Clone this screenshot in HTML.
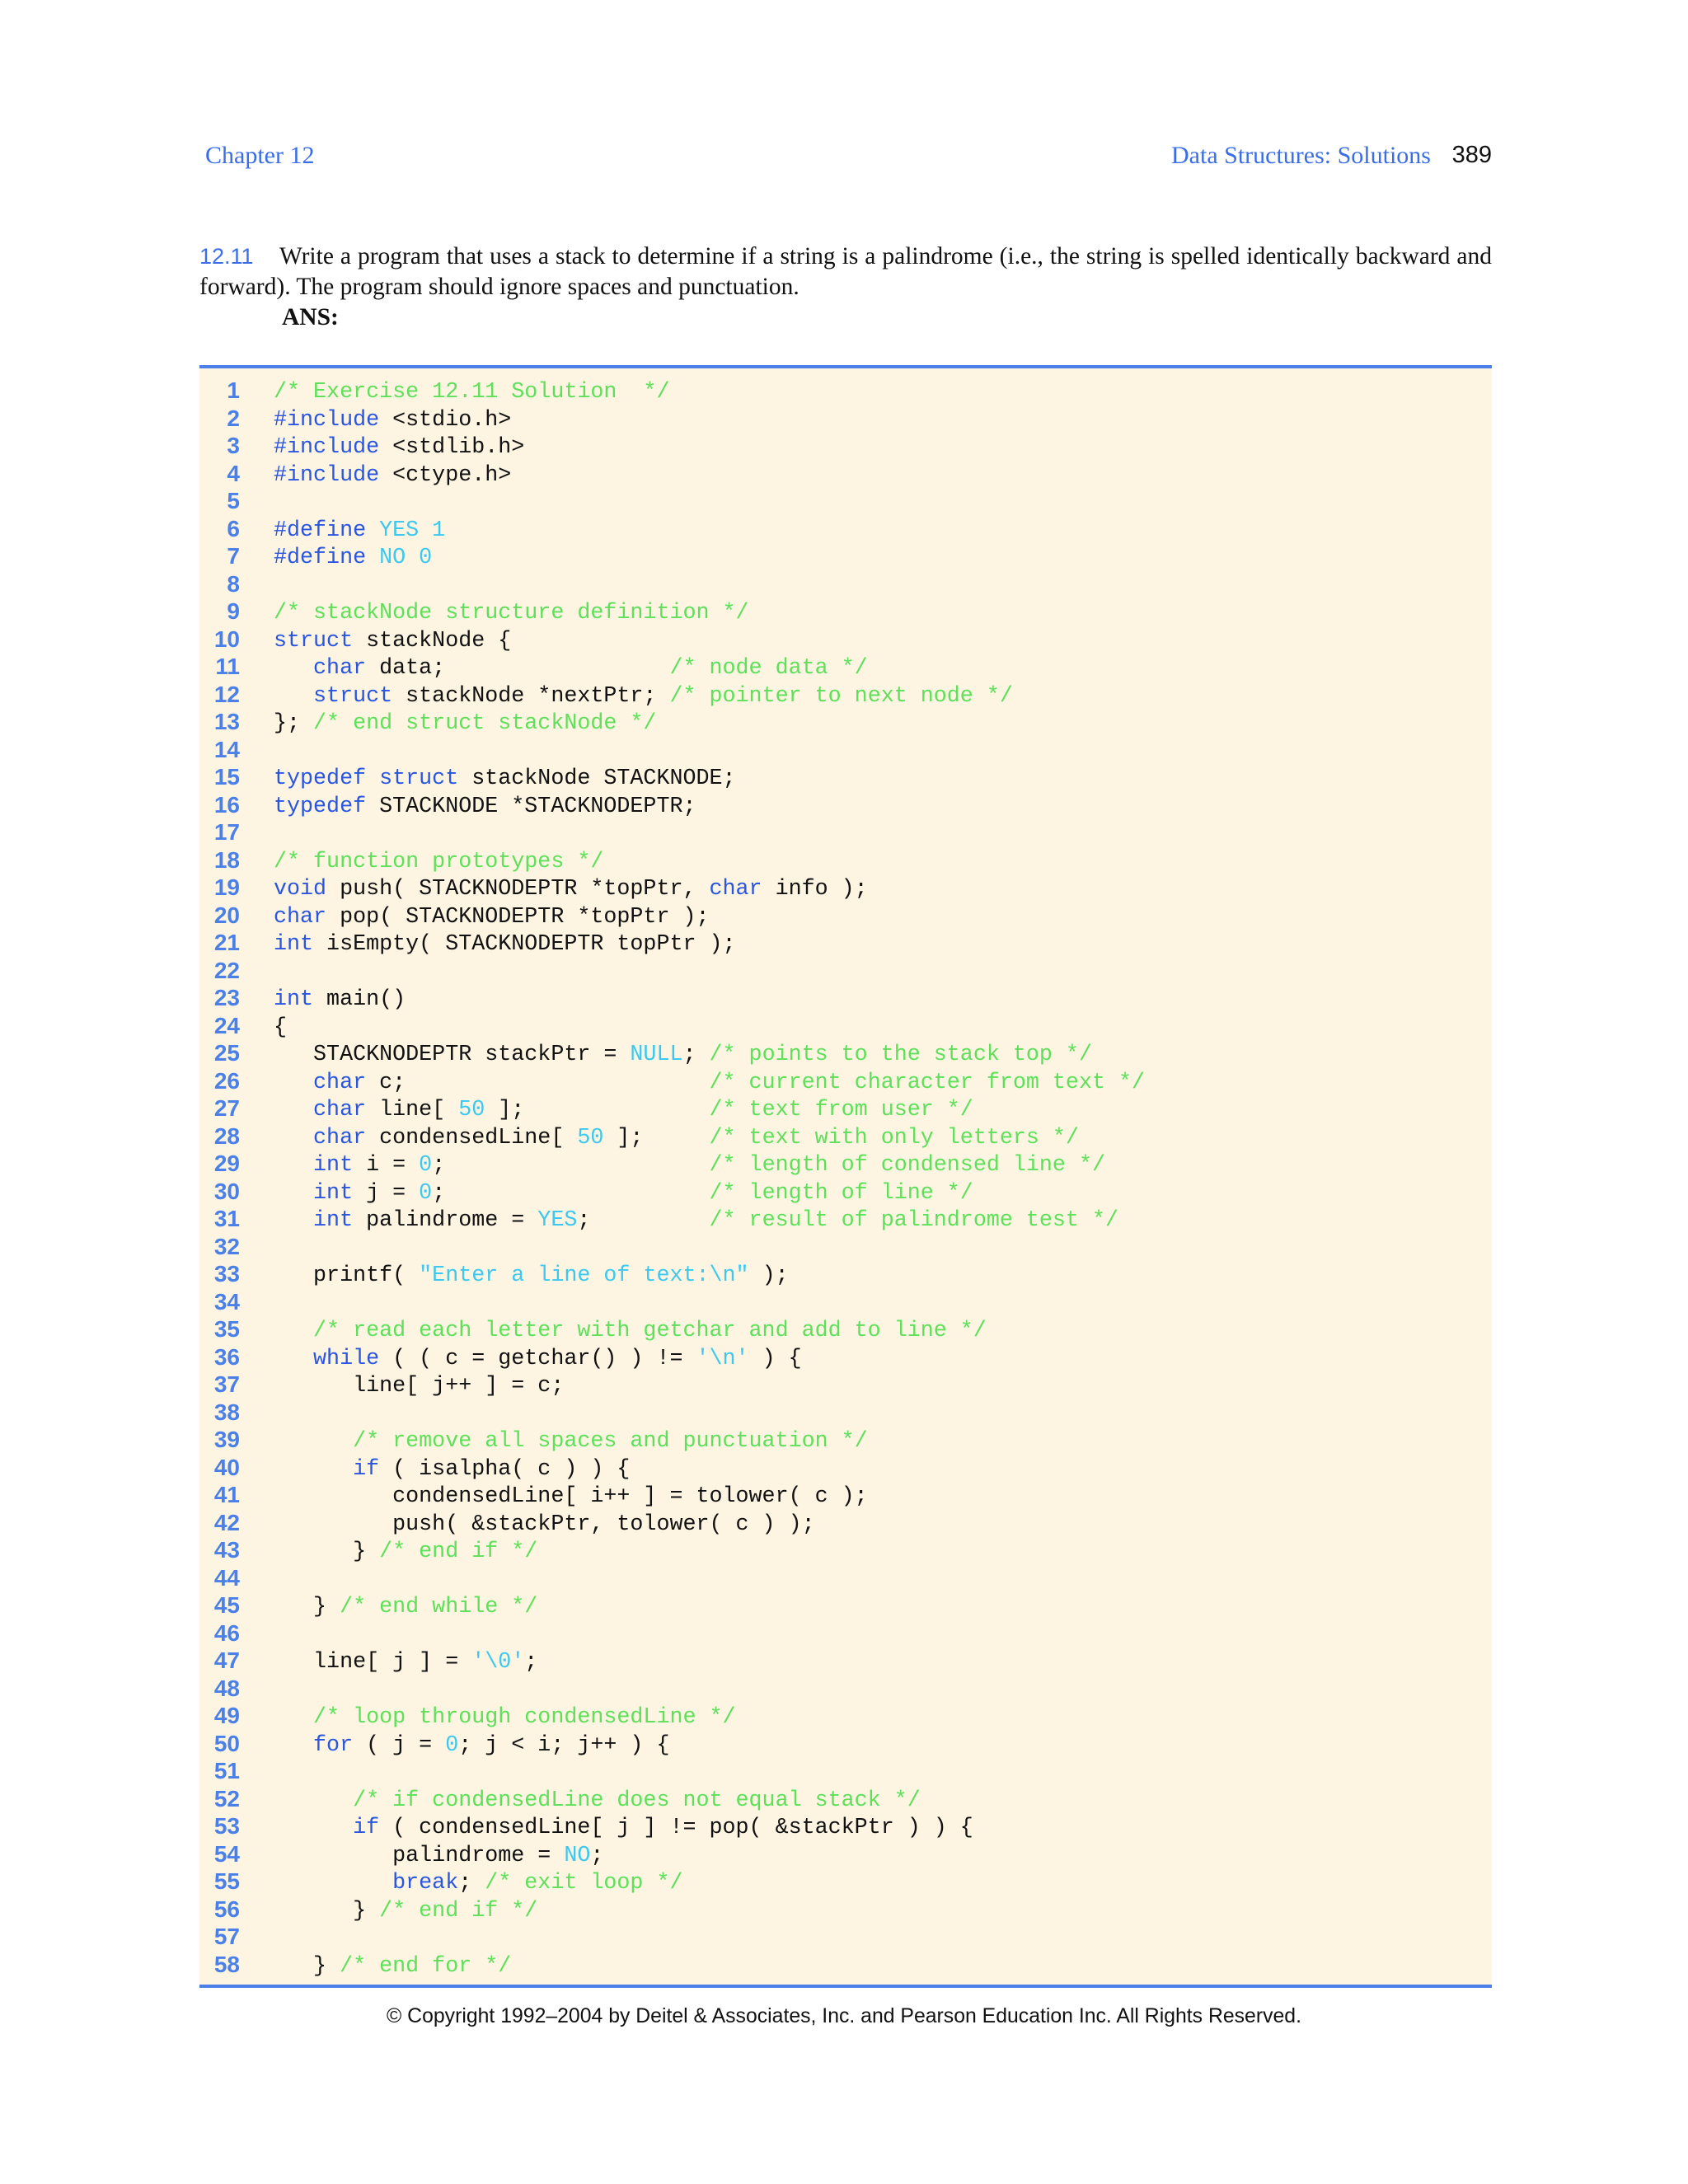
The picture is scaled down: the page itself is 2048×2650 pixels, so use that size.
<!DOCTYPE html>
<html><head><meta charset="utf-8"><style>
html,body{margin:0;padding:0;background:#fff;}
body{width:2048px;height:2650px;position:relative;overflow:hidden;}
.hdr{position:absolute;top:172px;font-family:"Liberation Serif",serif;font-size:30px;color:#3a6ee8;}
.q{position:absolute;left:242px;width:1568px;font-family:"Liberation Serif",serif;font-size:29.5px;color:#111;line-height:37px;text-align:justify;}
.box{position:absolute;left:242px;top:443px;width:1568px;height:1961px;background:#fdf5e2;border-top:4px solid #4a80e8;border-bottom:4px solid #4a80e8;}
pre{margin:0;position:absolute;top:460px;font-family:"Liberation Mono",monospace;font-size:26.7px;line-height:33.5px;}
.ln{left:240px;top:457px;width:51px;text-align:right;color:#4a80e8;font-family:"Liberation Sans",sans-serif;font-weight:bold;font-size:28px;}
.code{left:332px;color:#111;}
.k{color:#2a55e0}.c{color:#5ee05a}.l{color:#3cc8f0}
.copy{position:absolute;top:2433px;left:0;width:2048px;text-align:center;font-family:"Liberation Sans",sans-serif;font-size:24.8px;color:#111;}
</style></head><body>
<div class="hdr" style="left:249px">Chapter 12</div>
<div class="hdr" style="right:312px">Data Structures: Solutions</div>
<div class="hdr" style="right:238px;color:#111;font-family:'Liberation Sans',sans-serif;font-size:29px;top:172px">389</div>
<div class="q" style="top:293px"><span style="color:#3a6ee8;font-family:'Liberation Sans',sans-serif;font-size:27px">12.11</span>&nbsp;&nbsp;&nbsp; Write a program that uses a stack to determine if a string is a palindrome (i.e., the string is spelled identically backward and forward). The program should ignore spaces and punctuation.</div>
<div class="q" style="top:367px;left:342px;font-weight:bold;width:200px">ANS:</div>
<div class="box"></div>
<pre class="ln">1
2
3
4
5
6
7
8
9
10
11
12
13
14
15
16
17
18
19
20
21
22
23
24
25
26
27
28
29
30
31
32
33
34
35
36
37
38
39
40
41
42
43
44
45
46
47
48
49
50
51
52
53
54
55
56
57
58</pre>
<pre class="code"><span class="c">/* Exercise 12.11 Solution  */</span>
<span class="k">#include</span> &lt;stdio.h&gt;
<span class="k">#include</span> &lt;stdlib.h&gt;
<span class="k">#include</span> &lt;ctype.h&gt;

<span class="k">#define</span> <span class="l">YES 1</span>
<span class="k">#define</span> <span class="l">NO 0</span>

<span class="c">/* stackNode structure definition */</span>
<span class="k">struct</span> stackNode {
   <span class="k">char</span> data;                 <span class="c">/* node data */</span>
   <span class="k">struct</span> stackNode *nextPtr; <span class="c">/* pointer to next node */</span>
}; <span class="c">/* end struct stackNode */</span>

<span class="k">typedef</span> <span class="k">struct</span> stackNode STACKNODE;
<span class="k">typedef</span> STACKNODE *STACKNODEPTR;

<span class="c">/* function prototypes */</span>
<span class="k">void</span> push( STACKNODEPTR *topPtr, <span class="k">char</span> info );
<span class="k">char</span> pop( STACKNODEPTR *topPtr );
<span class="k">int</span> isEmpty( STACKNODEPTR topPtr );

<span class="k">int</span> main()
{
   STACKNODEPTR stackPtr = <span class="l">NULL</span>; <span class="c">/* points to the stack top */</span>
   <span class="k">char</span> c;                       <span class="c">/* current character from text */</span>
   <span class="k">char</span> line[ <span class="l">50</span> ];              <span class="c">/* text from user */</span>
   <span class="k">char</span> condensedLine[ <span class="l">50</span> ];     <span class="c">/* text with only letters */</span>
   <span class="k">int</span> i = <span class="l">0</span>;                    <span class="c">/* length of condensed line */</span>
   <span class="k">int</span> j = <span class="l">0</span>;                    <span class="c">/* length of line */</span>
   <span class="k">int</span> palindrome = <span class="l">YES</span>;         <span class="c">/* result of palindrome test */</span>

   printf( <span class="l">"Enter a line of text:\n"</span> );

   <span class="c">/* read each letter with getchar and add to line */</span>
   <span class="k">while</span> ( ( c = getchar() ) != <span class="l">'\n'</span> ) {
      line[ j++ ] = c;

      <span class="c">/* remove all spaces and punctuation */</span>
      <span class="k">if</span> ( isalpha( c ) ) {
         condensedLine[ i++ ] = tolower( c );
         push( &amp;stackPtr, tolower( c ) );
      } <span class="c">/* end if */</span>

   } <span class="c">/* end while */</span>

   line[ j ] = <span class="l">'\0'</span>;

   <span class="c">/* loop through condensedLine */</span>
   <span class="k">for</span> ( j = <span class="l">0</span>; j &lt; i; j++ ) {

      <span class="c">/* if condensedLine does not equal stack */</span>
      <span class="k">if</span> ( condensedLine[ j ] != pop( &amp;stackPtr ) ) {
         palindrome = <span class="l">NO</span>;
         <span class="k">break</span>; <span class="c">/* exit loop */</span>
      } <span class="c">/* end if */</span>

   } <span class="c">/* end for */</span></pre>
<div class="copy">© Copyright 1992–2004 by Deitel &amp; Associates, Inc. and Pearson Education Inc. All Rights Reserved.</div>
</body></html>
